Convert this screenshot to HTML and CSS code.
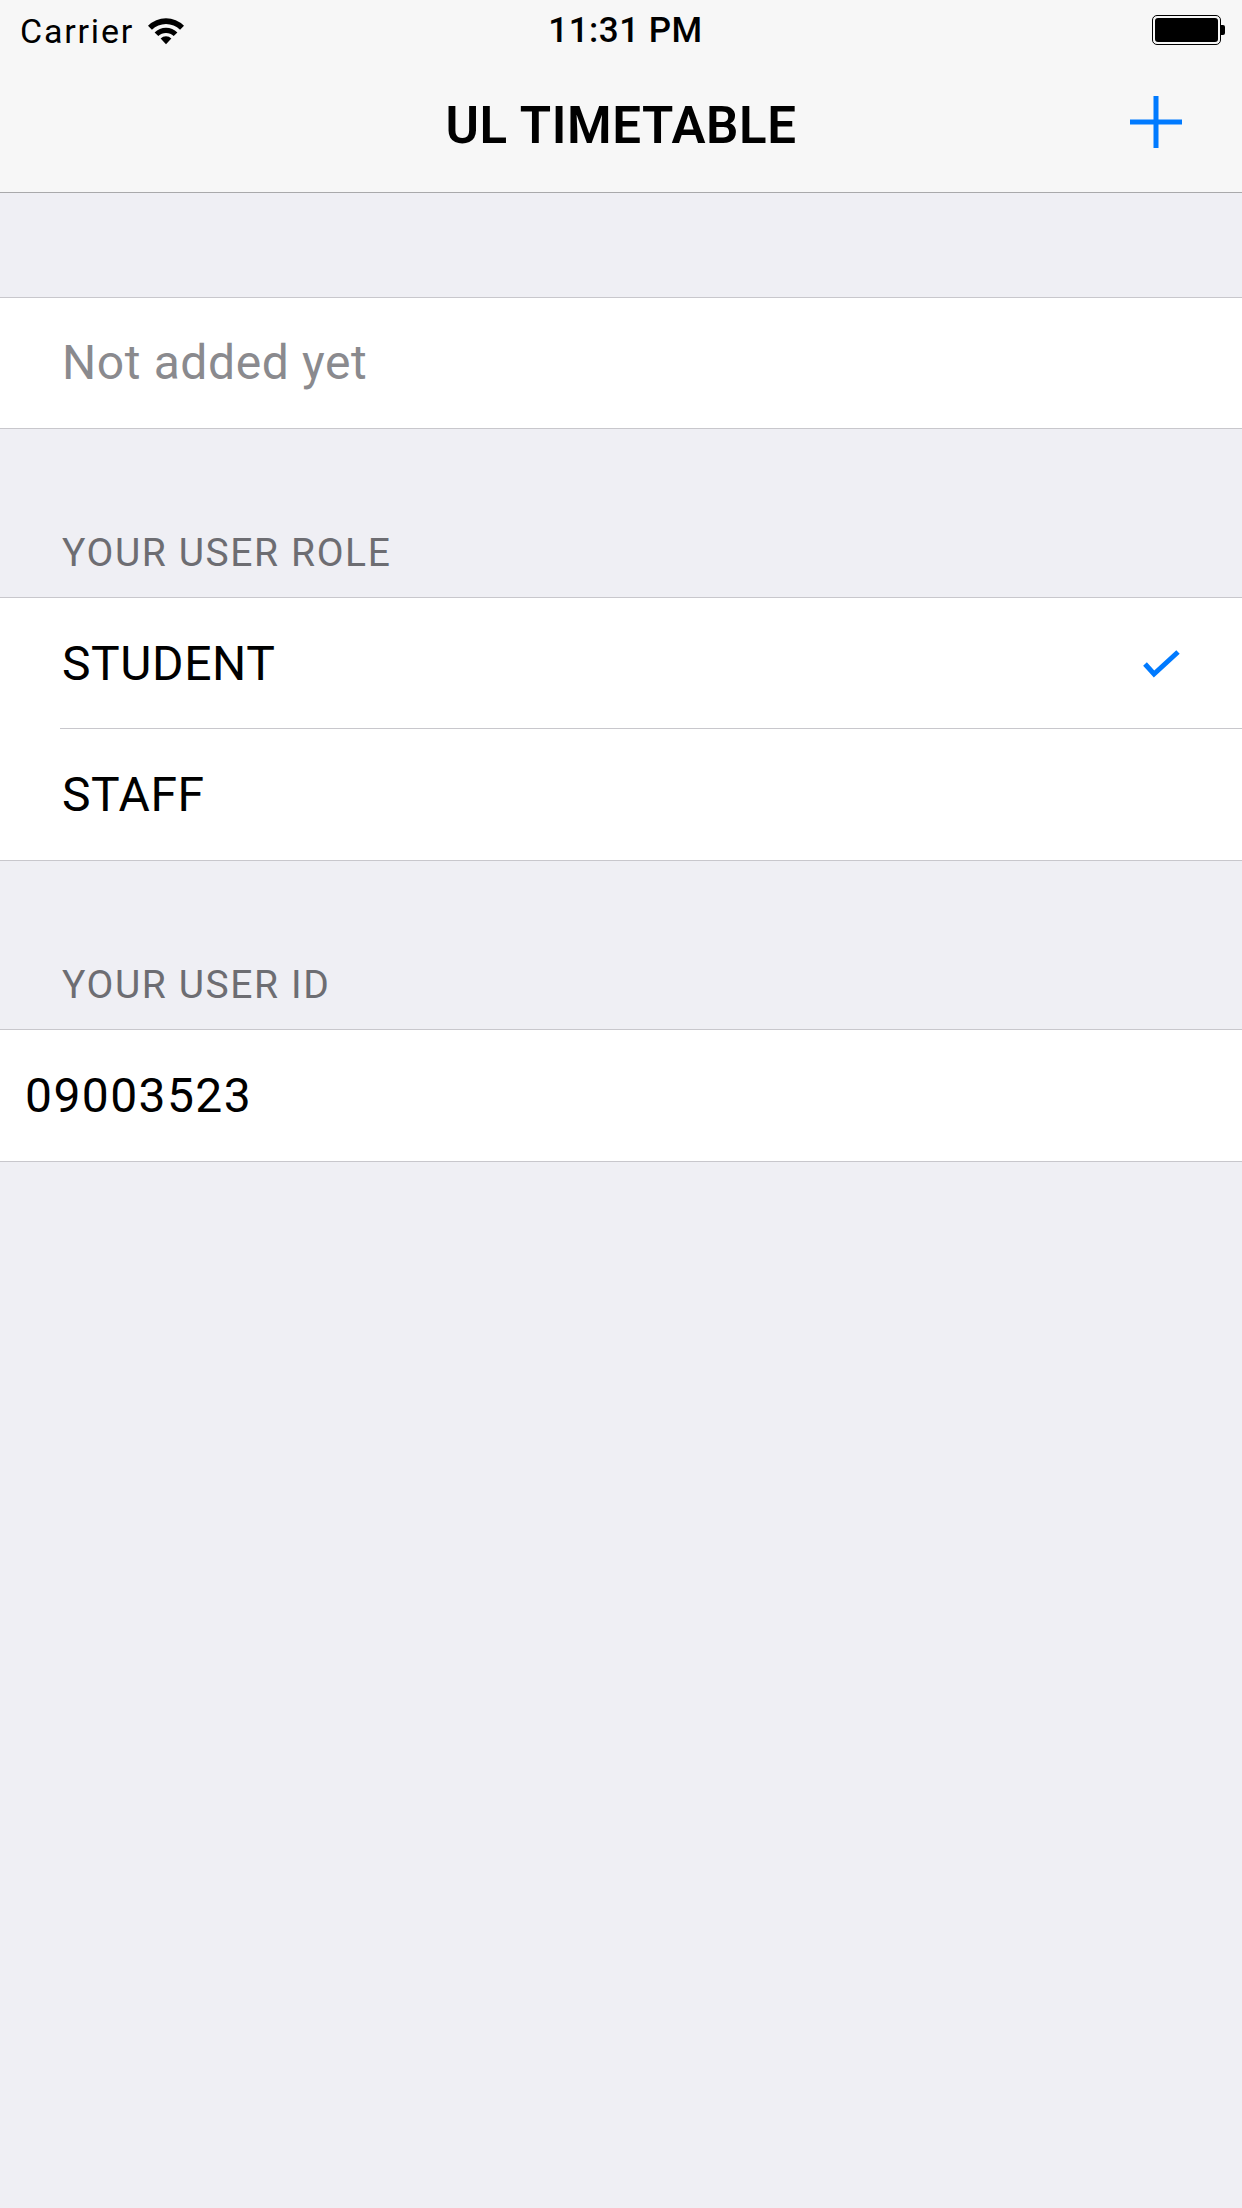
FILE: index.html
```html
<!DOCTYPE html>
<html>
<head>
<meta charset="utf-8">
<link rel="stylesheet" href="styles.css">
</head>
<body>
<div class="top">
  <div class="status">
    <div class="status-left">
      <span class="carrier">Carrier</span>
      <svg class="wifi" width="36" height="27" viewBox="0 0 38 28">
        <path d="M0,7.9 A27,27 0 0 1 38,7.9 L33.85,12.15 A21,21 0 0 0 4.15,12.15 Z"/>
        <path d="M6.98,14.98 A17,17 0 0 1 31.02,14.98 L27.13,18.87 A11.5,11.5 0 0 0 10.87,18.87 Z"/>
        <path d="M19,27.5 L13.34,21.34 A8,8 0 0 1 24.66,21.34 Z"/>
      </svg>
    </div>
    <div class="time">11:31 PM</div>
    <div class="status-right">
      <div class="battery"><div class="battery-fill"></div></div>
      <div class="battery-nub"></div>
    </div>
  </div>
  <div class="nav">
    <div class="nav-title">UL TIMETABLE</div>
    <svg class="plus" width="52" height="52" viewBox="0 0 52 52">
      <rect x="23.5" y="0" width="5" height="52"/>
      <rect x="0" y="23.5" width="52" height="5"/>
    </svg>
  </div>
</div>

<div class="spacer-top"></div>
<div class="group">
  <div class="cell placeholder">Not added yet</div>
</div>

<div class="header"><span>YOUR USER ROLE</span></div>
<div class="group">
  <div class="cell row-sep">
    <span>STUDENT</span>
    <svg class="check" width="40" height="30" viewBox="0 0 40 30">
      <path d="M3,15 L12,25 L36,3" fill="none" stroke="#007aff" stroke-width="5"/>
    </svg>
  </div>
  <div class="cell">STAFF</div>
</div>

<div class="header"><span>YOUR USER ID</span></div>
<div class="group">
  <div class="cell idcell">09003523</div>
</div>
</body>
</html>
```

FILE: styles.css
```css
* { box-sizing: border-box; }
html, body {
  margin: 0;
  padding: 0;
}
body {
  width: 1242px;
  min-height: 2208px;
  background: #efeff4;
  font-family: Roboto, "Liberation Sans", sans-serif;
  color: #000;
}
.top {
  background: #f7f7f7;
  border-bottom: 1px solid #a9a9ab;
}
.status {
  height: 60px;
  display: flex;
  align-items: center;
  justify-content: space-between;
  padding: 0 17px 0 20px;
  position: relative;
}
.status-left {
  display: flex;
  align-items: center;
  gap: 14px;
  width: 300px;
}
.carrier {
  font-size: 34px;
  line-height: 60px;
  letter-spacing: 1.8px;
  padding-top: 2px;
}
.wifi {
  fill: #000;
  margin-top: 2px;
}
.time {
  font-size: 35px;
  font-weight: 500;
  line-height: 60px;
  padding-top: 2px;
  margin-left: 6px;
  letter-spacing: 0.5px;
}
.status-right {
  width: 300px;
  display: flex;
  justify-content: flex-end;
  align-items: center;
}
.battery {
  width: 69px;
  height: 30px;
  border: 1.5px solid #000;
  border-radius: 5px;
  padding: 2px;
}
.battery-fill {
  width: 100%;
  height: 100%;
  background: #000;
  border-radius: 3px;
}
.battery-nub {
  width: 4px;
  height: 10px;
  background: #000;
  border-radius: 0 2px 2px 0;
}
.nav {
  height: 132px;
  display: flex;
  align-items: center;
  justify-content: center;
  position: relative;
}
.nav-title {
  font-size: 51px;
  font-weight: 600;
  line-height: 132px;
  letter-spacing: 0.6px;
}
.plus {
  position: absolute;
  right: 60px;
  top: 36px;
  fill: #007aff;
}
.spacer-top {
  height: 104px;
}
.group {
  background: #fff;
  border-top: 1px solid #c8c7cc;
  border-bottom: 1px solid #c8c7cc;
}
.cell {
  height: 131px;
  line-height: 131px;
  font-size: 48px;
  letter-spacing: 0.6px;
  padding-left: 62px;
  padding-right: 62px;
  display: flex;
  align-items: center;
  justify-content: space-between;
  position: relative;
}
.cell span { line-height: 131px; }
.row-sep::after {
  content: "";
  position: absolute;
  left: 60px;
  right: 0;
  bottom: 0;
  height: 1px;
  background: #c8c7cc;
}
.placeholder {
  color: #8a8a8e;
  height: 130px;
  line-height: 130px;
}
.check {
  margin-right: -2px;
}
.idcell {
  padding-left: 25px;
  letter-spacing: 1.4px;
}
.header {
  height: 168px;
  display: flex;
  align-items: flex-end;
  padding-left: 62px;
  padding-bottom: 24px;
  font-size: 39px;
  line-height: 39px;
  color: #6d6d72;
  letter-spacing: 1.6px;
}
```
